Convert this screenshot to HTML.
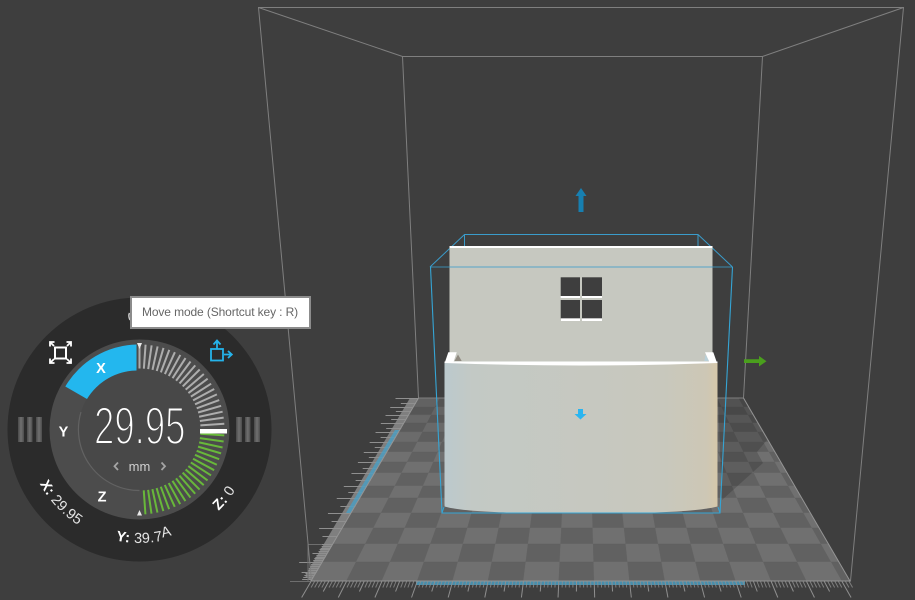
<!DOCTYPE html>
<html><head><meta charset="utf-8"><style>
html,body{margin:0;padding:0;background:#3e3e3e;width:915px;height:600px;overflow:hidden}
svg{position:absolute;left:0;top:0}
#tip{position:absolute;left:130px;top:296px;width:177px;height:29px;border:2px solid #8c8c8c;background:#fff;color:#666;font:12px/29px "Liberation Sans",sans-serif;text-indent:10px;white-space:nowrap;letter-spacing:-.12px}
</style></head><body>
<svg width="915" height="600" viewBox="0 0 915 600" font-family="Liberation Sans, sans-serif">
<defs>
<linearGradient id="front" x1="0" x2="1" y1="0" y2="0">
<stop offset="0" stop-color="#bbc9cd"/><stop offset=".1" stop-color="#c3c9c5"/><stop offset=".8" stop-color="#c8c8bd"/><stop offset=".96" stop-color="#cdc7b5"/><stop offset="1" stop-color="#d6c8aa"/></linearGradient>
<linearGradient id="bar" x1="0" x2="1" y1="0" y2="0">
<stop offset="0" stop-color="#4a4a4a"/><stop offset=".5" stop-color="#707070"/><stop offset="1" stop-color="#4c4c4c"/></linearGradient>
<path id="arc" d="M26 429.5A113.5 113.5 0 0 0 253 429.5"/>
</defs>
<g id="floor"></g>
<polygon points="718,398 743,398 767,440 757,452 763,463 722,500" fill="#000" opacity=".16"/>
<polygon points="418.5,398 410,398 305,576 311,581" fill="#7f7f7f"/>
<rect x="416" y="581" width="329" height="4" fill="#4aa2c8" opacity=".8"/>
<g id="ticks" stroke="#8f8f8f" stroke-width="1" fill="none"></g>
<polygon points="395,430 400,430 351,513 346,513" fill="#4a9fc4" opacity=".8"/>
<g fill="none" stroke="#7f7f7f" stroke-width="1">
<path d="M258.5 7.5H903.5L850.5 581H311.5ZM258.5 7.5L402.5 56.5H762.5L903.5 7.5M402.5 56.5L418.5 398M762.5 56.5L743.5 398M418.5 398H743.5"/>
</g>
<path d="M418.5 398L311 581H850L743.5 398" fill="none" stroke="#949494"/>
<path d="M464.5 234.5V248M698 234.5V248M430 267L464.5 234.5H698L732.5 267" fill="none" stroke="#3a9ccb" stroke-width="1"/>
<rect x="449.5" y="247" width="263" height="118" fill="#c6c8c0"/>
<rect x="449.5" y="246" width="263" height="2" fill="#fff"/>
<rect x="560.7" y="277.3" width="19.3" height="18.7" fill="#3e3e3e"/><rect x="582" y="277.3" width="20" height="18.7" fill="#3e3e3e"/>
<rect x="560.7" y="300" width="19.3" height="18.4" fill="#3e3e3e"/><rect x="582" y="300" width="20" height="18.4" fill="#3e3e3e"/>
<path d="M560.7 296H580V298H560.7ZM582 296H602V298H582ZM561 318.4H580V321H561ZM582 318.4H602V321H582Z" fill="#fff"/>
<path d="M444.5 361.5H717.5V506.500C700 511 660 513.500 580.500 513.500C500 513.500 460 511 444.500 506.500Z" fill="url(#front)"/>
<path d="M444.500 361.500H717.500V363Q580 368 444.500 363Z" fill="#fff"/>
<polygon points="445,362 448.300,352.300 456.700,352.300 453.500,362" fill="#fff"/>
<polygon points="705,352.300 713.300,352.300 716.700,362 709.300,362" fill="#fff"/>
<polygon points="454.500,361 458,354.500 461.700,361" fill="#8f8a80"/>
<polygon points="704.300,361 705.500,354.500 709,361" fill="#b9d0d8"/>
<path d="M430.5 267H732.5" stroke="#3a9ccb" stroke-opacity=".8" fill="none"/>
<path d="M430.5 267L442 513H720L732.5 267" stroke="#35a5d5" stroke-width="1.1" fill="none"/>
<path d="M442 513L444 507M720 513L718 507" stroke="#35a5d5" fill="none"/>
<path d="M578.5 212V196H575.5L581 188L586.500 196H583.500V212Z" fill="#177fb0"/>
<path d="M744 359.300H759V356L766.500 361.200L759 366.500V363H744Z" fill="#4a9f1d"/>
<path d="M578 409H583V414H586.500L580.500 419.500L574.500 414H578Z" fill="#2ab5f0"/>

<circle cx="139.5" cy="429.5" r="132" fill="#2b2b2b"/>
<circle cx="139.5" cy="429.5" r="90" fill="#4c4c4c"/>
<circle cx="139.5" cy="429.5" r="61" fill="#484848"/>
<path d="M139.500 490.500A61 61 0 0 1 81 412" fill="none" stroke="#626262" stroke-width="1.200"/>
<path d="M136.5 344.5V370.5A59 59 0 0 0 87 399L65.3 386.5A85 85 0 0 1 136.5 344.5Z" fill="#23b7ee"/>
<g id="wt"></g>
<rect x="200" y="429" width="27" height="4.5" fill="#fff"/>
<path d="M137 343H142L139.5 349ZM137 515.5H142L139.5 510Z" fill="#e8e8e8"/>
<g fill="url(#bar)"><rect x="18" y="417" width="6" height="25"/><rect x="27" y="417" width="5.500" height="25"/><rect x="36" y="417" width="6" height="25"/><rect x="236" y="417" width="6" height="25"/><rect x="245" y="417" width="5.500" height="25"/><rect x="254" y="417" width="6" height="25"/></g>
<g fill="#fff" font-weight="bold" font-size="14.5" text-anchor="middle"><text x="101" y="373">X</text><text x="63.500" y="436.500">Y</text><text x="102" y="501.500">Z</text></g>
<text transform="translate(94,444) scale(.69,1)" font-size="53" fill="#fff" stroke="#484848" stroke-width="2" style="paint-order:fill stroke">29.95</text>
<text x="139.500" y="471" font-size="13" fill="#cfcfcf" text-anchor="middle">mm</text>
<path d="M118 462.500L114.500 466.300L118 470M161.500 462.500L165 466.300L161.500 470" fill="none" stroke="#a4a4a4" stroke-width="1.800"/>
<g font-size="14.500" fill="#e4e4e4" text-anchor="middle" letter-spacing=".3">
<text><textPath href="#arc" startOffset="85"><tspan font-weight="bold" fill="#fff">X:</tspan> 29.95</textPath></text>
<text><textPath href="#arc" startOffset="183"><tspan font-weight="bold" fill="#fff">Y:</tspan> 39.7<tspan dy="-3">A</tspan></textPath></text>
<text><textPath href="#arc" startOffset="279"><tspan font-weight="bold" fill="#fff">Z:</tspan> 0</textPath></text>
</g>
<rect x="55" y="347.500" width="11" height="11" fill="none" stroke="#fff" stroke-width="2"/>
<path d="M50 342L54 346M50 346.500V342H54.500M71 342L67 346M71 346.500V342H66.500M50 363L54 359M50 358.500V363H54.500M71 363L67 359M71 358.500V363H66.500" fill="none" stroke="#fff" stroke-width="1.800"/>
<rect x="211" y="349" width="12" height="11.500" fill="none" stroke="#25b3ea" stroke-width="1.800"/>
<path d="M217 349V342M213.500 344.500L217 340.500L220.500 344.500M224 354.500H231M228 351L231.800 354.500L228 358" fill="none" stroke="#25b3ea" stroke-width="1.800"/>
<path d="M129.500 313Q128 316 130 320" fill="none" stroke="#ccc" stroke-width="1.500"/>
</svg>
<div id="tip">Move mode (Shortcut key : R)</div>
<script>
var ys=[398,407,415,423,432,442,452,462,473,486,498,513,528,544,562,581];
function L(y){return 418.5-(y-398)*107.5/183}
function R(y){return 743.5+(y-398)*106.5/183}
var f=document.getElementById("floor"),s="";
s+='<polygon points="418.5,398 743.5,398 850,581 311,581" fill="#6b6b6b"/>';
var c=35.4/539;
function X(y,k){return L(y)+(R(y)-L(y))*Math.min(1,k*c)}
function g(a,b,t){var v=Math.round(a+(b-a)*t);return "rgb("+v+","+v+","+v+")"}
for(var i=0;i<15;i++){for(var j=0;j<16;j++){
if(j*c>=1)continue;
var y0=ys[i],y1=ys[i+1],t0=Math.min(1,i/6);
var col=((i+j)%2==0)?g(98,112,t0):g(84,97,t0);
s+='<polygon points="'+X(y0,j)+','+y0+' '+X(y0,j+1)+','+y0+' '+X(y1,j+1)+','+y1+' '+X(y1,j)+','+y1+'" fill="'+col+'" stroke="'+col+'" stroke-width=".4"/>';
}}
f.innerHTML=s;
var t="";
for(var m=0;m<=152;m++){
var x=311+m*3.54,h=m%10==0?16:(m%5==0?10:6);
var dx=(x-580.5)/461;
t+='<path d="M'+x+' 581.5L'+(x+dx*h)+' '+(581.5+h)+'" stroke-opacity="'+(h==6?.8:1)+'"/>';
}
for(var i=0;i<15;i++){for(var q=0;q<10;q++){
var y=ys[i]+(ys[i+1]-ys[i])*q/10;
var len=q==0?23:(q==5?15:10);
if(i<13&&q%5!=0)continue;
t+='<path d="M'+L(y)+' '+(Math.round(y)+.5)+'H'+(L(y)-len)+'"/>';
}}
t+='<path d="M290 581.5H311M308 544.5H322M308 544.500V581" stroke="#6e6e6e"/>';
document.getElementById("ticks").innerHTML=t;
var w="";
function tick(a,r0,r1,c,sw){var r=a*Math.PI/180,S=Math.sin(r),C=Math.cos(r);
return '<line x1="'+(139.5+S*r0)+'" y1="'+(429.5-C*r0)+'" x2="'+(139.5+S*r1)+'" y2="'+(429.5-C*r1)+'" stroke="'+c+'" stroke-width="'+sw+'"/>';}
for(var a=0;a<88;a+=4.1){w+=tick(a,61,85,"#adadad",2)}
for(var a=94;a<=180;a+=4.1){w+=tick(a,61,85,"#68b83a",2)}
document.getElementById("wt").innerHTML=w;
</script>
</body></html>
